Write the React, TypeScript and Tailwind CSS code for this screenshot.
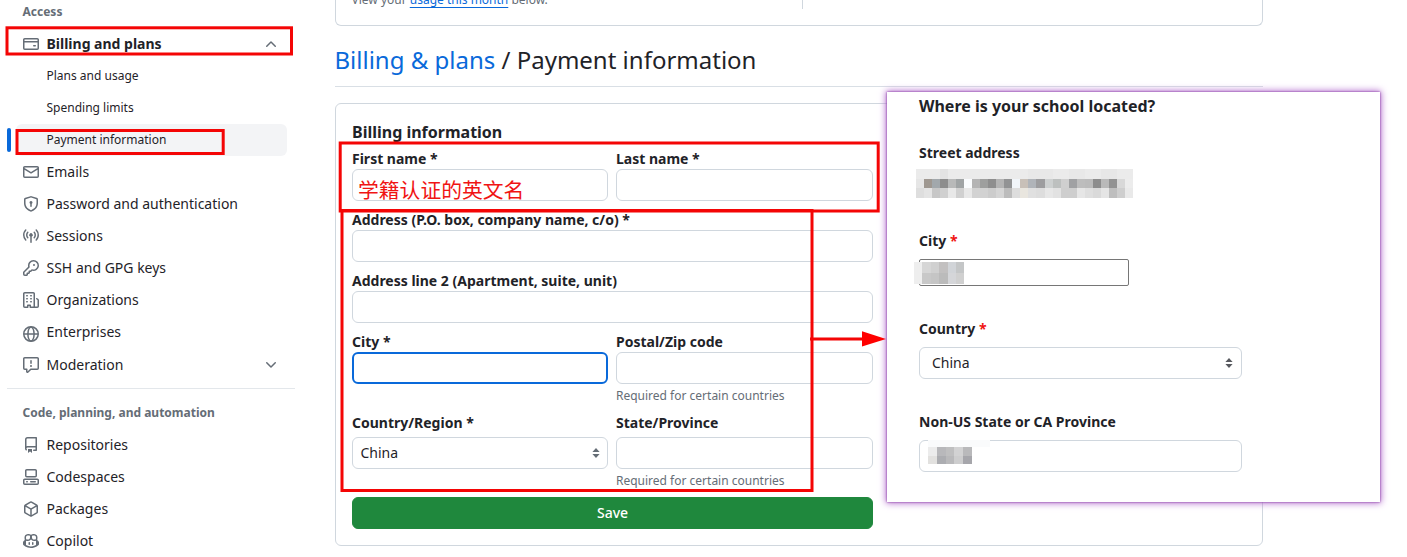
import React from "react";

const icons: Record<string, string> = {
  card: "M10.75 9a.75.75 0 0 0 0 1.5h1.5a.75.75 0 0 0 0-1.5h-1.5ZM0 3.75C0 2.784.784 2 1.75 2h12.5c.966 0 1.75.784 1.75 1.75v8.5A1.75 1.75 0 0 1 14.25 14H1.75A1.75 1.75 0 0 1 0 12.25ZM14.5 6.5h-13v5.75c0 .138.112.25.25.25h12.5a.25.25 0 0 0 .25-.25Zm0-2.75a.25.25 0 0 0-.25-.25H1.75a.25.25 0 0 0-.25.25V5h13Z",
  mail: "M1.75 2h12.5c.966 0 1.75.784 1.75 1.75v8.5A1.75 1.75 0 0 1 14.25 14H1.75A1.75 1.75 0 0 1 0 12.25v-8.5C0 2.784.784 2 1.75 2ZM1.5 12.251c0 .138.112.25.25.25h12.5a.25.25 0 0 0 .25-.25V5.809L8.38 9.397a.75.75 0 0 1-.76 0L1.5 5.809v6.442Zm13-8.181v-.32a.25.25 0 0 0-.25-.25H1.75a.25.25 0 0 0-.25.25v.32L8 7.88Z",
  shield: "m8.533.133 5.25 1.68A1.75 1.75 0 0 1 15 3.48V7c0 1.566-.32 3.182-1.303 4.682-.983 1.498-2.585 2.813-5.032 3.855a1.697 1.697 0 0 1-1.33 0c-2.447-1.042-4.049-2.357-5.032-3.855C1.32 10.182 1 8.566 1 7V3.48a1.75 1.75 0 0 1 1.217-1.667l5.25-1.68a1.748 1.748 0 0 1 1.066 0Zm-.61 1.429.001.001-5.25 1.68a.251.251 0 0 0-.174.237V7c0 1.36.275 2.666 1.057 3.859.784 1.194 2.121 2.342 4.366 3.298a.196.196 0 0 0 .154 0c2.245-.957 3.582-2.103 4.366-3.297C13.225 9.666 13.5 8.358 13.5 7V3.48a.25.25 0 0 0-.174-.238l-5.25-1.68a.25.25 0 0 0-.153 0ZM9.5 6.5c0 .536-.286 1.032-.75 1.3v2.45a.75.75 0 0 1-1.5 0V7.8A1.5 1.5 0 1 1 9.5 6.5Z",
  broadcast: "M8.75 8.582v5.668a.75.75 0 0 1-1.5 0V8.582a1.75 1.75 0 1 1 1.5 0Zm3.983-7.125a.75.75 0 0 1 1.06.026A7.976 7.976 0 0 1 16 7c0 2.139-.84 4.083-2.207 5.517a.75.75 0 1 1-1.086-1.034A6.474 6.474 0 0 0 14.5 7a6.474 6.474 0 0 0-1.793-4.483.75.75 0 0 1 .026-1.06Zm-9.466 0c.3.286.312.76.026 1.06A6.474 6.474 0 0 0 1.5 7a6.47 6.47 0 0 0 1.793 4.483.75.75 0 0 1-1.086 1.034A7.973 7.973 0 0 1 0 7c0-2.139.84-4.083 2.207-5.517a.75.75 0 0 1 1.06-.026Zm8.556 2.321A4.988 4.988 0 0 1 13 7a4.988 4.988 0 0 1-1.177 3.222.75.75 0 1 1-1.146-.967A3.487 3.487 0 0 0 11.5 7c0-.86-.309-1.645-.823-2.255a.75.75 0 0 1 1.146-.967Zm-6.492.958A3.48 3.48 0 0 0 4.5 7a3.48 3.48 0 0 0 .823 2.255.75.75 0 0 1-1.146.967A4.981 4.981 0 0 1 3 7a4.982 4.982 0 0 1 1.188-3.236.75.75 0 1 1 1.143.972Z",
  key: "M10.5 0a5.499 5.499 0 1 1-1.288 10.848l-.932.932a.749.749 0 0 1-.53.22H7v.75a.749.749 0 0 1-.22.53l-.5.5a.749.749 0 0 1-.53.22H5v.75a.749.749 0 0 1-.22.53l-.5.5a.749.749 0 0 1-.53.22h-2A1.75 1.75 0 0 1 0 14.25v-2c0-.199.079-.389.22-.53l4.932-4.932A5.5 5.5 0 0 1 10.5 0Zm-4 5.5c-.001.431.069.86.205 1.269a.75.75 0 0 1-.181.768L1.5 12.56v1.69c0 .138.112.25.25.25h1.69l.06-.06v-1.19a.75.75 0 0 1 .75-.75h1.19l.06-.06v-1.19a.75.75 0 0 1 .75-.75h1.19l1.023-1.025a.75.75 0 0 1 .768-.18A4 4 0 1 0 6.5 5.5ZM11 6a1 1 0 1 1 0-2 1 1 0 0 1 0 2Z",
  org: "M1.75 16A1.75 1.75 0 0 1 0 14.25V1.75C0 .784.784 0 1.75 0h8.5C11.216 0 12 .784 12 1.75v12.5c0 .085-.006.168-.018.25h2.268a.25.25 0 0 0 .25-.25V8.285a.25.25 0 0 0-.111-.208l-1.055-.703a.749.749 0 1 1 .832-1.248l1.055.703c.487.325.779.871.779 1.456v5.965A1.75 1.75 0 0 1 14.25 16h-3.5a.766.766 0 0 1-.197-.026c-.099.017-.2.026-.303.026h-3a.75.75 0 0 1-.75-.75V14h-1v1.25a.75.75 0 0 1-.75.75Zm-.25-1.75c0 .138.112.25.25.25H4v-1.25a.75.75 0 0 1 .75-.75h2.5a.75.75 0 0 1 .75.75v1.25h2.25a.25.25 0 0 0 .25-.25V1.75a.25.25 0 0 0-.25-.25h-8.5a.25.25 0 0 0-.25.25ZM3.75 6h.5a.75.75 0 0 1 0 1.5h-.5a.75.75 0 0 1 0-1.5ZM3 3.75A.75.75 0 0 1 3.75 3h.5a.75.75 0 0 1 0 1.5h-.5A.75.75 0 0 1 3 3.75Zm4 3A.75.75 0 0 1 7.75 6h.5a.75.75 0 0 1 0 1.5h-.5A.75.75 0 0 1 7 6.75ZM7.75 3h.5a.75.75 0 0 1 0 1.5h-.5a.75.75 0 0 1 0-1.5ZM3 9.75A.75.75 0 0 1 3.75 9h.5a.75.75 0 0 1 0 1.5h-.5A.75.75 0 0 1 3 9.75ZM7.75 9h.5a.75.75 0 0 1 0 1.5h-.5a.75.75 0 0 1 0-1.5Z",
  report: "M0 1.75C0 .784.784 0 1.75 0h12.5C15.216 0 16 .784 16 1.75v9.5A1.75 1.75 0 0 1 14.25 13H8.06l-2.573 2.573A1.458 1.458 0 0 1 3 14.543V13H1.75A1.75 1.75 0 0 1 0 11.25Zm1.75-.25a.25.25 0 0 0-.25.25v9.5c0 .138.112.25.25.25h2a.75.75 0 0 1 .75.75v2.19l2.72-2.72a.749.749 0 0 1 .53-.22h6.5a.25.25 0 0 0 .25-.25v-9.5a.25.25 0 0 0-.25-.25Zm7 2.25v2.5a.75.75 0 0 1-1.5 0v-2.5a.75.75 0 0 1 1.5 0ZM9 9a1 1 0 1 1-2 0 1 1 0 0 1 2 0Z",
  repo: "M2 2.5A2.5 2.5 0 0 1 4.5 0h8.75a.75.75 0 0 1 .75.75v12.5a.75.75 0 0 1-.75.75h-2.5a.75.75 0 0 1 0-1.5h1.75v-2h-8a1 1 0 0 0-.714 1.7.75.75 0 1 1-1.072 1.05A2.495 2.495 0 0 1 2 11.5Zm10.5-1h-8a1 1 0 0 0-1 1v6.708A2.486 2.486 0 0 1 4.5 9h8ZM5 12.25a.25.25 0 0 1 .25-.25h3.5a.25.25 0 0 1 .25.25v3.25a.25.25 0 0 1-.4.2l-1.45-1.087a.249.249 0 0 0-.3 0L5.4 15.7a.25.25 0 0 1-.4-.2Z",
  codespaces: "M0 11.25c0-.966.784-1.75 1.75-1.75h12.5c.966 0 1.75.784 1.75 1.75v3A1.75 1.75 0 0 1 14.25 16H1.75A1.75 1.75 0 0 1 0 14.25Zm2-9.5C2 .784 2.784 0 3.75 0h8.5C13.216 0 14 .784 14 1.75v5a1.75 1.75 0 0 1-1.75 1.75h-8.5A1.75 1.75 0 0 1 2 6.75Zm1.75-.25a.25.25 0 0 0-.25.25v5c0 .138.112.25.25.25h8.5a.25.25 0 0 0 .25-.25v-5a.25.25 0 0 0-.25-.25Zm-2 9.5a.25.25 0 0 0-.25.25v3c0 .138.112.25.25.25h12.5a.25.25 0 0 0 .25-.25v-3a.25.25 0 0 0-.25-.25ZM7 12.75a.75.75 0 0 1 .75-.75h4.5a.75.75 0 0 1 0 1.5h-4.5a.75.75 0 0 1-.75-.75Zm-4 0a.75.75 0 0 1 .75-.75h.5a.75.75 0 0 1 0 1.5h-.5a.75.75 0 0 1-.75-.75Z",
  package: "m8.878.392 5.25 3.045c.54.314.872.89.872 1.514v6.098a1.75 1.75 0 0 1-.872 1.514l-5.25 3.045a1.75 1.75 0 0 1-1.756 0l-5.25-3.045A1.75 1.75 0 0 1 1 11.049V4.951c0-.624.332-1.201.872-1.514L7.122.392a1.75 1.75 0 0 1 1.756 0ZM7.875 1.69l-4.63 2.685L8 7.133l4.755-2.758-4.63-2.685a.248.248 0 0 0-.25 0ZM2.5 5.677v5.372c0 .09.047.171.125.216l4.625 2.683V8.432Zm6.25 8.271 4.625-2.683a.25.25 0 0 0 .125-.216V5.677L8.75 8.432Z",
  copilot: "M7.998 15.035c-4.562 0-7.873-2.914-7.998-3.749V9.338c.085-.628.677-1.686 1.588-2.065.013-.07.024-.143.036-.218.029-.183.06-.384.126-.612-.201-.508-.254-1.084-.254-1.656 0-.87.128-1.769.693-2.484.579-.733 1.494-1.124 2.724-1.261 1.206-.134 2.262.034 2.944.765.05.053.096.108.139.165.044-.057.094-.112.143-.165.682-.731 1.738-.899 2.944-.765 1.23.137 2.145.528 2.724 1.261.566.715.693 1.614.693 2.484 0 .572-.053 1.148-.254 1.656.066.228.098.429.126.612.012.076.024.148.037.218.924.385 1.522 1.471 1.591 2.095v1.872c0 .766-3.351 3.795-8.002 3.795Zm0-1.485c2.28 0 4.584-1.11 5.002-1.433V7.862l-.023-.116c-.49.21-1.075.291-1.727.291-1.146 0-2.059-.327-2.71-.991A3.222 3.222 0 0 1 8 6.303a3.24 3.24 0 0 1-.544.743c-.65.664-1.563.991-2.71.991-.652 0-1.236-.081-1.727-.291l-.023.116v4.255c.419.323 2.722 1.433 5.002 1.433ZM6.762 2.83c-.193-.206-.637-.413-1.682-.297-1.019.113-1.479.404-1.713.7-.247.312-.369.789-.369 1.554 0 .793.129 1.171.308 1.371.162.181.519.379 1.442.379.853 0 1.339-.235 1.638-.54.315-.322.527-.827.617-1.553.117-.935-.037-1.395-.241-1.614Zm4.155-.297c-1.044-.116-1.488.091-1.681.297-.204.219-.359.679-.242 1.614.091.726.303 1.231.618 1.553.299.305.784.54 1.638.54.922 0 1.28-.198 1.442-.379.179-.2.308-.578.308-1.371 0-.765-.123-1.242-.37-1.554-.233-.296-.693-.587-1.713-.7ZM6.25 9.037a.75.75 0 0 1 .75.75v1.501a.75.75 0 0 1-1.5 0V9.787a.75.75 0 0 1 .75-.75Zm4.25.75v1.501a.75.75 0 0 1-1.5 0V9.787a.75.75 0 0 1 1.5 0Z",
  down: "M12.78 5.22a.749.749 0 0 1 0 1.06l-4.25 4.25a.749.749 0 0 1-1.06 0L3.22 6.28a.749.749 0 1 1 1.06-1.06L8 8.939l3.72-3.719a.749.749 0 0 1 1.06 0Z",
};

function Icon({ name, className = "" }: { name: string; className?: string }) {
  if (name === "globe") {
    return (
      <svg viewBox="0 0 16 16" className={`size-4 shrink-0 ${className}`} fill="none" stroke="currentColor" strokeWidth="1.5">
        <circle cx="8" cy="8" r="7.25" />
        <ellipse cx="8" cy="8" rx="3.1" ry="7.1" />
        <path d="M1 8h14" />
      </svg>
    );
  }
  return (
    <svg viewBox="0 0 16 16" className={`size-4 shrink-0 ${className}`} fill="currentColor">
      <path d={icons[name]} />
    </svg>
  );
}

function NavItem({ icon, label, bold, chevron, iconClass = "" }: { icon: string; label: string; bold?: boolean; chevron?: "up" | "down"; iconClass?: string }) {
  return (
    <li className="flex h-8 items-center gap-[7.5px] pr-2 pl-[23px]">
      <Icon name={icon} className={`text-[#656d76] ${iconClass}`} />
      <span className={`flex-1 text-sm leading-5 ${bold ? "font-bold" : ""}`}>{label}</span>
      {chevron && <Icon name="down" className={`text-[#656d76] ${chevron === "up" ? "rotate-180" : ""}`} />}
    </li>
  );
}

function SubItem({ label, active }: { label: string; active?: boolean }) {
  return (
    <li className="flex h-8 items-center gap-[5px] pl-[7px]">
      <span className={`h-6 w-1 rounded-md ${active ? "bg-[#0969da]" : ""}`} />
      <span className={`flex h-8 flex-1 items-center rounded-md pb-px pl-[30.5px] text-xs ${active ? "bg-[#f3f4f6]" : ""}`}>{label}</span>
    </li>
  );
}

function Field({ label, gap, hint, focused, children }: { label: string; gap?: boolean; hint?: string; focused?: boolean; children?: React.ReactNode }) {
  return (
    <div className="flex min-w-0 flex-col">
      <label className={`h-[21px] text-sm leading-[21px] font-bold whitespace-nowrap ${gap ? "mb-1" : ""}`}>{label}</label>
      <div className={`flex h-8 items-center rounded-md px-2 text-sm ${focused ? "border-2 border-[#0969da]" : "border border-[#d0d7de]"}`}>{children}</div>
      {hint && <p className="mt-[3px] h-[18px] text-xs leading-[18px] text-[#656d76]">{hint}</p>}
    </div>
  );
}

function Sorter({ className }: { className: string }) {
  return (
    <svg viewBox="0 0 8 10" className={`h-[10px] w-2 ${className}`} fill="currentColor">
      <path d="M4 0 7.6 4H.4ZM4 10 .4 6h7.2Z" />
    </svg>
  );
}

function Mosaic({ rows, cell }: { rows: string[][]; cell: string }) {
  return (
    <div className="flex flex-col">
      {rows.map((row, i) => (
        <div key={i} className="flex">
          {row.map((c, j) => (
            <span key={j} className={cell} style={{ backgroundColor: c }} />
          ))}
        </div>
      ))}
    </div>
  );
}

const street = [
  "ebebeb ebebeb ebebeb e3e3e3 ebebeb ebebeb ebebeb ebebeb ebebeb ebebeb ebebeb ebebeb ebebeb ebebeb e8e8e8 e8e8e8 e8e8e8 ebebeb ebebeb e8e8e8 e8e8e8 ebebeb ebebeb e7e7e7 e7e7e7 ebebeb ebebeb",
  "e6e6e6 9f9891 a2a8ac 8d8d8d b8b9b9 a0a4a5 fafcfe b4b4b4 9e9f9e 8e8e8e b4b4b4 929394 f1f5f9 c8c0b8 b0b4b9 9d9d9f cdd0d0 bdc0bf cfcfcf a0a1a3 bdbdbd bbbbbb 8d8d8d b9b9b9 929292 d8d8d8 ececec",
  "dedede e4e4e4 c7c7c7 d0d0d0 e8e8e8 d0d0d0 e8e8e8 d2d2d2 d2d2d2 cccccc d5d5d5 bcbcbc dddddd e9e6df e0e0e0 dddddd e7e7e7 e2e2e2 cecece cecece e6e6e6 dfdfdf dadada e5e5e5 bebebe cecece e9e9e9",
].map((r) => r.split(" ").map((c) => "#" + c));

const city = [
  ["#eeeeee", "#d6d6d6", "#d0d0d0", "#c2c0c0", "#d1d4d8", "#c4c6c7"],
  ["#eeeeee", "#c8c8c8", "#c5c5c5", "#bbbbbb", "#d5d6d9", "#d0d0d0"],
];

const province = [
  ["#ececec", "#b8b8bb", "#bfbfc0", "#d2d2d3", "#b9b9bb"],
  ["#e2e1df", "#acadb1", "#b9b9bb", "#cdcdce", "#a6a6ab"],
];

export default function App() {
  return (
    <div className="relative flex h-[557px] w-[1407px] overflow-hidden bg-white font-['Noto_Sans','Noto_Sans_CJK_SC',sans-serif] text-[#1f2328]">
      <nav className="w-[295px] shrink-0">
        <h3 className="flex h-7 items-center pb-1 pl-[22.5px] text-xs font-bold text-[#656d76]">Access</h3>
        <ul className="w-[287px]">
          <NavItem icon="card" label="Billing and plans" bold chevron="up" />
          <SubItem label="Plans and usage" />
          <SubItem label="Spending limits" />
          <SubItem label="Payment information" active />
          <NavItem icon="mail" label="Emails" />
          <NavItem icon="shield" label="Password and authentication" />
          <NavItem icon="broadcast" label="Sessions" />
          <NavItem icon="key" label="SSH and GPG keys" />
          <NavItem icon="org" label="Organizations" />
          <NavItem icon="globe" label="Enterprises" iconClass="mt-[3px]" />
        </ul>
        <ul className="w-[287px] pt-px">
          <NavItem icon="report" label="Moderation" chevron="down" />
        </ul>
        <div className="mt-[7px] ml-[7px] h-px bg-[#d0d7de]/60" />
        <h3 className="mt-2 flex h-8 items-center pl-[22.5px] text-xs font-bold text-[#656d76]">Code, planning, and automation</h3>
        <ul className="w-[287px]">
          <NavItem icon="repo" label="Repositories" />
          <NavItem icon="codespaces" label="Codespaces" />
          <NavItem icon="package" label="Packages" />
          <NavItem icon="copilot" label="Copilot" />
        </ul>
      </nav>

      <main className="ml-10 flex w-[928px] flex-col">
        <section className="flex h-[26px] shrink-0 rounded-b-md border border-t-0 border-[#d0d7de]">
          <p className="-mt-[9px] h-[18px] w-[466px] pl-[15.5px] text-xs leading-[18px] text-[#656d76]">
            View your <span className="text-[#0969da] underline underline-offset-[3px] [text-decoration-skip-ink:none]">usage this month</span> below.
          </p>
          <div className="h-[9px] w-px bg-[#d0d7de]" />
        </section>
        <h2 className="mt-4 h-[45px] shrink-0 border-b border-[#d0d7de]/80 text-2xl leading-9">
          <span className="-ml-[0.5px] text-[#0969da]">Billing &amp; plans</span> / Payment information
        </h2>
        <section className="mt-4 h-[443px] shrink-0 rounded-md border border-[#d0d7de] px-4">
          <h3 className="mt-4 h-6 leading-6 font-bold">Billing information</h3>
          <form className="mt-1 flex w-[521px] flex-col">
            <div className="grid h-[61px] grid-cols-[256px_257px] gap-2">
              <Field label="First name *">
                <span className="-ml-[3px] pt-[7px] font-['Noto_Sans_CJK_SC',sans-serif] text-[20.8px] leading-6 whitespace-nowrap text-[#f01414]">学籍认证的英文名</span>
              </Field>
              <Field label="Last name *" />
            </div>
            <div className="grid h-[61px] grid-cols-1">
              <Field label="Address (P.O. box, company name, c/o) *" />
            </div>
            <div className="grid h-[61px] grid-cols-1">
              <Field label="Address line 2 (Apartment, suite, unit)" />
            </div>
            <div className="grid h-[81px] grid-cols-[256px_257px] gap-2">
              <Field label="City *" focused />
              <Field label="Postal/Zip code" hint="Required for certain countries" />
            </div>
            <div className="grid h-[85px] grid-cols-[256px_257px] gap-2">
              <Field label="Country/Region *" gap>
                <span className="-ml-[0.5px] flex-1">China</span>
                <Sorter className="-mr-px text-[#656d76]" />
              </Field>
              <Field label="State/Province" gap hint="Required for certain countries" />
            </div>
            <button type="button" className="h-8 rounded-md border border-[#1f883d] bg-[#1f883d] text-sm font-medium text-white">Save</button>
          </form>
        </section>
      </main>

      <aside className="absolute top-[92px] left-[887px] flex h-[410px] w-[493px] flex-col bg-white pl-8 shadow-[0_0_2px_#7d2c9c,0_0_7px_1px_#b46ccd]">
        <h3 className="mt-0.5 h-6 leading-6 font-bold">Where is your school located?</h3>
        <p className="mt-6 h-[21px] text-sm leading-[21px] font-bold">Street address</p>
        <div className="mt-1.5 -ml-[3px] h-[29px] w-[217px]">
          <Mosaic rows={street} cell="h-[9.7px] w-[8.04px]" />
        </div>
        <p className="mt-8 h-[21px] text-sm leading-[21px] font-bold">City <span className="text-[#f01414]">*</span></p>
        <div className="mt-2 flex h-[27px] w-[210px] items-center rounded-[2px] border border-[#767676]">
          <div className="-ml-1.5">
            <Mosaic rows={city} cell="h-[11px] w-[8.4px]" />
          </div>
        </div>
        <p className="mt-8 h-[21px] text-sm leading-[21px] font-bold">Country <span className="text-[#f01414]">*</span></p>
        <div className="mt-2 flex h-8 w-[323px] items-center rounded-md border border-[#d0d7de] pr-2 pl-3 text-sm">
          <span className="flex-1">China</span>
          <Sorter className="text-[#57595f]" />
        </div>
        <p className="mt-8 h-[21px] text-sm leading-[21px] font-bold">Non-US State or CA Province</p>
        <div className="mt-2 flex h-8 w-[323px] items-start rounded-md border border-[#d0d7de] pl-2">
          <div className="-mt-px w-[62px] bg-[#fafbfc]">
            <div className="h-[7px]" />
            <div className="bg-white">
              <Mosaic rows={province} cell="h-[8.5px] w-[8.8px]" />
            </div>
          </div>
        </div>
      </aside>

      {/* Annotation frames and arrow over the page */}
      <svg className="pointer-events-none absolute inset-0" width="1407" height="557" fill="none" stroke="#f40505" strokeWidth="3">
        <rect x="7" y="27.8" width="284.5" height="26.2" />
        <rect x="17" y="130.5" width="206.2" height="23" />
        <rect x="340.2" y="143" width="538" height="68" />
        <rect x="342" y="210.5" width="470" height="280" />
        <path d="M810 339H864" />
        <path d="M862 331.2 886 339l-24 7.6Z" fill="#f00" stroke="none" />
      </svg>
    </div>
  );
}
